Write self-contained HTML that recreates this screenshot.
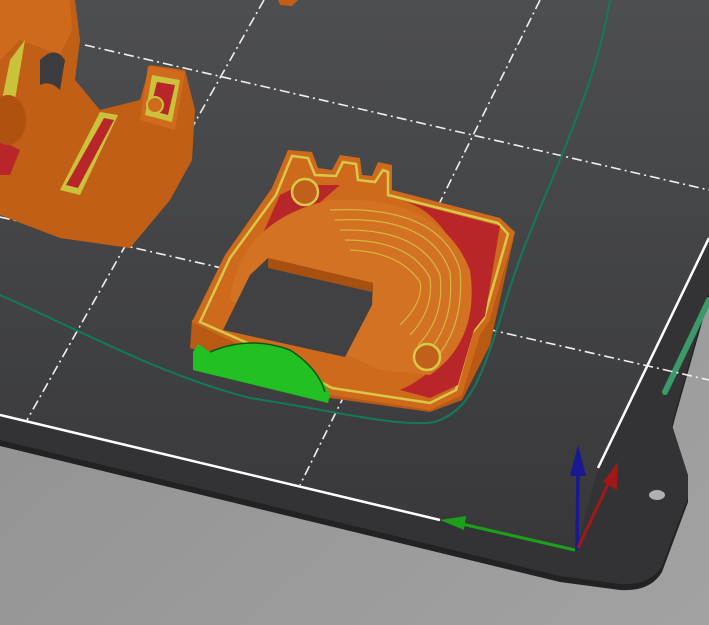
<!DOCTYPE html>
<html><head><style>html,body{margin:0;padding:0;width:709px;height:625px;overflow:hidden;background:#8e8e8e}</style></head>
<body>
<svg width="709" height="625" viewBox="0 0 709 625" xmlns="http://www.w3.org/2000/svg">
<defs>
<linearGradient id="bg" x1="0" y1="0" x2="0" y2="1"><stop offset="0" stop-color="#4d4e50"/><stop offset="1" stop-color="#38383a"/></linearGradient>
<linearGradient id="low" x1="0" y1="0" x2="1" y2="1"><stop offset="0" stop-color="#8c8c8c"/><stop offset="1" stop-color="#a2a2a2"/></linearGradient>
</defs>
<rect width="709" height="625" fill="url(#low)"/>
<path d="M0 0 H709 V298 L675 418 L672 430 L688 480 L688 502 L662 572 Q650 592 620 590 L560 582 L0 446 Z" fill="#222223"/>
<path d="M0 0 H709 V293 L675 413 L672 425 L688 475 L688 497 L662 566 Q650 586 620 584 L560 576 L0 440 Z" fill="#333335"/>
<path d="M0 0 H709 V238 L598 468 L575 552 L440 520 L0 415 Z" fill="url(#bg)"/>
<ellipse cx="657" cy="495" rx="8" ry="5" fill="#b0b0b0"/>
<path d="M0 415 L440 520" stroke="#fff" stroke-width="2.5"/>
<path d="M598 468 L709 238" stroke="#fff" stroke-width="2.5"/>
<path d="M665 392 L709 300" stroke="#3a9a6a" stroke-width="6" stroke-linecap="round"/>
<g stroke="#f0f0f0" stroke-width="1.6" stroke-dasharray="10 4 2 4" fill="none">
<path d="M264 0 L27 420"/>
<path d="M540 0 L300 485"/>
<path d="M85 45 L709 190"/>
<path d="M0 217 L709 380"/>
</g>
<path d="M0 295 C80 330 160 375 250 398 C330 410 400 428 435 422 C470 410 480 380 500 320 C520 250 540 210 560 160 C580 110 600 60 610 0" stroke="#127a5a" stroke-width="2" fill="none"/>
<g>
<path d="M0 0 L75 0 L80 40 L75 80 L100 110 L140 100 L150 65 L185 70 L195 110 L192 160 L170 200 L130 248 L60 238 L0 215 Z" fill="#c25f16"/>
<path d="M0 0 L70 0 L72 30 L60 55 L20 40 L0 60 Z" fill="#cf6a1c"/>
<path d="M148 66 L185 72 L175 130 L140 120 Z" fill="#d06a1c"/>
<path d="M152 75 L180 80 L172 122 L145 115 Z" fill="#c9c23a"/>
<path d="M157 82 L175 85 L168 115 L150 110 Z" fill="#b8262a"/>
<circle cx="155" cy="105" r="8" fill="#d06a1c" stroke="#c9c23a" stroke-width="2"/>
<path d="M100 112 L118 115 L80 195 L60 190 Z" fill="#c9c23a"/>
<path d="M104 118 L114 120 L78 188 L66 185 Z" fill="#b8262a"/>
<path d="M10 60 L25 40 L15 100 L0 110 Z" fill="#c9c23a"/>
<path d="M0 140 L20 150 L10 175 L0 175 Z" fill="#b8262a"/>
<path d="M40 60 Q55 45 65 60 L60 90 Q50 80 40 85 Z" fill="#3c3c3e"/>
<ellipse cx="8" cy="120" rx="18" ry="25" fill="#b0520f"/>
</g>
<path d="M278 0 L298 0 L292 6 L280 5 Z" fill="#c25f16"/>
<path d="M192 320 L190 348 L330 398 L430 412 L462 400 L490 345 L515 232 L490 320 Z" fill="#b85a14"/>
<path d="M192 322 L225 255 L272 188 L288 150 L312 152 L318 168 L332 170 L340 155 L360 158 L362 175 L372 176 L378 162 L392 165 L392 190 L500 218 L515 232 L490 320 L480 335 L462 395 L430 410 L330 395 L250 350 Z" fill="#cf6a1c"/>
<path d="M200 322 L230 258 L276 195 L292 156 L308 158 L315 175 L336 176 L343 162 L356 164 L358 180 L375 182 L383 170 L388 172 L388 195 L498 223 L508 234 L484 318 L472 333 L456 390 L430 403 L332 388 L252 345 Z" fill="none" stroke="#d8c84a" stroke-width="2.5"/>
<path d="M400 200 L500 226 L485 316 L474 330 L458 385 L430 398 L400 390 Q470 360 460 260 Q440 210 400 200 Z" fill="#b8262a"/>
<path d="M280 195 L300 185 L340 185 L300 220 L260 240 Z" fill="#b8262a"/>
<path d="M230 300 Q240 220 330 200 Q440 195 470 270 Q480 340 430 375 L380 370 Z" fill="#d27222"/>
<g fill="none" stroke="#d8c84a" stroke-width="1.2" opacity="0.8">
<path d="M330 210 Q440 205 460 270 Q465 330 430 365"/>
<path d="M335 220 Q430 215 450 272 Q455 325 425 355"/>
<path d="M340 230 Q420 228 440 275 Q445 318 418 345"/>
<path d="M345 240 Q410 240 430 278 Q434 310 410 335"/>
<path d="M350 250 Q400 252 420 282 Q424 302 400 325"/>
</g>
<path d="M223 330 L250 275 L268 258 L373 283 L372 305 L345 357 Z" fill="#414143"/>
<path d="M268 258 L373 283 L372 292 L268 268 Z" fill="#a8500f"/>
<circle cx="305" cy="192" r="13" fill="#c0601a" stroke="#d8c84a" stroke-width="2.5"/>
<circle cx="427" cy="357" r="13" fill="#c0601a" stroke="#d8c84a" stroke-width="2.5"/>
<path d="M193 352 L198 344 L210 352 Q250 335 290 350 Q318 368 330 395 L328 403 L193 370 Z" fill="#22c022"/>
<path d="M210 352 Q250 335 290 350 Q318 368 325 392" fill="none" stroke="#0b5a0b" stroke-width="1.5"/>
<path d="M575 550 L462 524" stroke="#1ca01c" stroke-width="3"/>
<path d="M440 520 L466 516 L464 530 Z" fill="#1ca01c"/>
<path d="M577 550 L578 470" stroke="#1a1a90" stroke-width="3.5"/>
<path d="M570 476 L578 445 L586 476 Z" fill="#1a1a90"/>
<path d="M578 548 L610 480" stroke="#a01818" stroke-width="3"/>
<path d="M603 482 L618 462 L617 490 Z" fill="#a01818"/>
</svg>
</body></html>
